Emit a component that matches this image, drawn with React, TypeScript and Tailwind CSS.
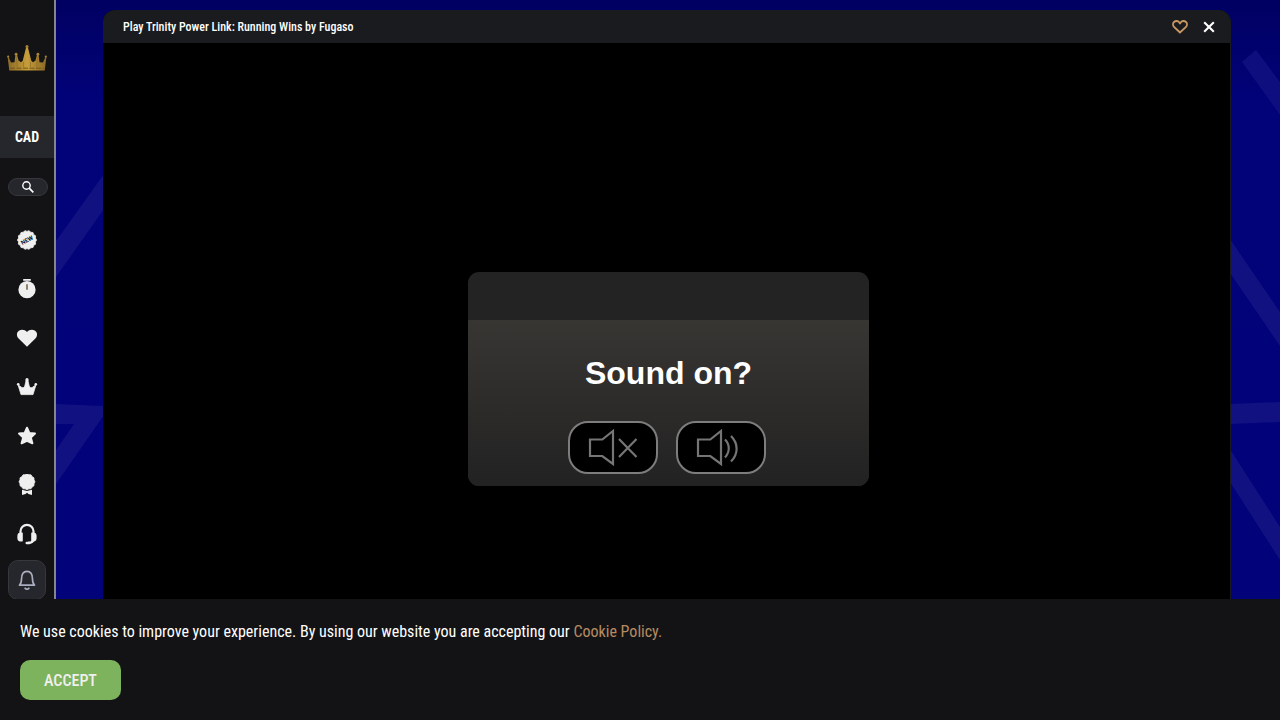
import type { ReactNode } from 'react';

function Backdrop() {
  return (
    <svg className="absolute inset-0 h-full w-full" viewBox="0 0 1280 720" preserveAspectRatio="none" aria-hidden="true">
      <defs>
        <linearGradient id="shade" x1="0" y1="0" x2="0" y2="1">
          <stop offset="0" stopColor="#000062" />
          <stop offset="0.14" stopColor="#020279" />
          <stop offset="1" stopColor="#02027a" />
        </linearGradient>
      </defs>
      <rect width="1280" height="720" fill="url(#shade)" />
      <g fill="#111182">
        <path d="M104 174L56 241v36l48-68z" />
        <path d="M56 404l48 2v9L56 484v-34l18-26H56z" />
        <path d="M1242 62l14-12 24 32v33z" opacity=".8" />
        <path d="M1230 239l50 73v34l-50-73z" />
        <path d="M1230 404l50-2v20l-50 2z" />
        <path d="M1230 449l50 78v33l-50-78z" />
      </g>
    </svg>
  );
}

function GoldCrown() {
  return (
    <svg width="40" height="26" viewBox="0 0 40 26" aria-hidden="true">
      <defs>
        <linearGradient id="gold" x1="0" y1="0" x2="1" y2="0">
          <stop offset="0" stopColor="#8b6a24" />
          <stop offset="0.3" stopColor="#ad8732" />
          <stop offset="0.5" stopColor="#c79e3a" />
          <stop offset="0.7" stopColor="#ad8732" />
          <stop offset="1" stopColor="#8b6a24" />
        </linearGradient>
      </defs>
      <path
        d="M2.300 25.500L.6 12h1L4 17.500l3.500-.2L8.500 9h1.300l1.700 6.500 2.500 1.800 1.700-1.500L19.200 2h1.600l3.500 13.800 1.700 1.500 2.500-1.800L30.200 9h1.300l1 8.300 3.500.2L38.400 12h1l-1.700 13.500z"
        fill="url(#gold)"
      />
      <path d="M3 23.200h34" stroke="#735719" strokeWidth="1" strokeDasharray="5 1.500" />
      <path d="M9.300 12l1 10M30.700 12l-1 10M16.500 17v5M23.500 17v5" stroke="#8d6f28" strokeWidth=".7" />
      <g fill="#a88432">
        <circle cx="20" cy="1.600" r="1.500" />
        <circle cx="9.100" cy="9.200" r="1.400" />
        <circle cx="30.900" cy="9.200" r="1.400" />
        <circle cx="1.200" cy="11.600" r="1.100" />
        <circle cx="38.800" cy="11.600" r="1.100" />
      </g>
    </svg>
  );
}

function scallop(cx: number, cy: number, outer: number, inner: number, lobes: number) {
  return Array.from({ length: lobes * 2 }, (_, i) => {
    const r = i % 2 ? inner : outer;
    const a = (i * Math.PI) / lobes;
    return `${(cx + r * Math.cos(a)).toFixed(2)},${(cy + r * Math.sin(a)).toFixed(2)}`;
  }).join(' ');
}

function NavIcon({ children }: { children: ReactNode }) {
  return (
    <svg width="22" height="22" viewBox="0 0 22 22" fill="#efefef" aria-hidden="true">
      {children}
    </svg>
  );
}

const navItems: { label: string; icon: ReactNode }[] = [
  {
    label: 'New games',
    icon: (
      <>
        <polygon points={scallop(11, 11, 9.6, 8.6, 14)} stroke="#efefef" strokeWidth=".8" strokeLinejoin="round" />
        <text x="11" y="13.200" transform="rotate(-28 11 11)" textAnchor="middle" fontFamily="Roboto, sans-serif" fontWeight="700" fontSize="6" fill="#131315">
          NEW
        </text>
      </>
    ),
  },
  {
    label: 'Quick games',
    icon: (
      <>
        <path d="M7.200 1h7.600v1.800H7.200z" />
        <circle cx="11" cy="11.700" r="8.600" />
        <path d="M11 6.200v5.500" stroke="#6f6238" strokeWidth="1.500" />
      </>
    ),
  },
  {
    label: 'Favourites',
    icon: <path d="M11 19.800L2.600 11.500C.2 8.900.5 5.300 2.900 3.700 5.500 2 9 2.500 11 5.100c2-2.600 5.500-3.100 8.100-1.400 2.400 1.600 2.700 5.200.3 7.800z" />,
  },
  {
    label: 'VIP',
    icon: (
      <>
        <path d="M5 18.600L2 8.800l3.800 2.700c1.300.5 2.600-.2 3-1.500L10.200 4h1.600l1.400 6c.4 1.300 1.700 2 3 1.500L20 8.800l-3 9.800z" stroke="#efefef" strokeWidth=".8" strokeLinejoin="round" />
        <circle cx="11" cy="3.700" r="1.600" />
        <circle cx="2.200" cy="8.200" r="1.300" />
        <circle cx="19.800" cy="8.200" r="1.300" />
      </>
    ),
  },
  {
    label: 'Popular',
    icon: (
      <path
        d="M11 2.700l2.300 5.200 5.700.7-4.200 3.900 1.600 5.800-5.400-2.500-5.400 2.500 1.600-5.800L3 8.600l5.700-.7z"
        stroke="#efefef"
        strokeWidth="2"
        strokeLinejoin="round"
      />
    ),
  },
  {
    label: 'Tournaments',
    icon: (
      <>
        <polygon points={scallop(11, 7.8, 8, 7.3, 12)} stroke="#efefef" strokeWidth=".8" strokeLinejoin="round" />
        <path d="M6 15.800l5 1.200 5-1.200v5.300l-3.500-1.100-1.500-1.200-1.500 1.200L6 21.100z" />
      </>
    ),
  },
  {
    label: 'Support',
    icon: (
      <>
        <path d="M4.500 13V8.300a6.500 6.500 0 0113 0V16c0 2.800-2.200 3.900-5.500 3.900" fill="none" stroke="#efefef" strokeWidth="2.200" />
        <path d="M1.600 11.500C2 9.500 4.500 9 6.800 9.800v8.400c-2 .7-4 .3-4.900-1-.6-1-.7-4-.3-5.700zM20.400 11.500c-.4-2-2.900-2.500-5.200-1.700v8.400c2 .7 4 .3 4.900-1 .6-1 .7-4 .3-5.700z" />
        <rect x="9.500" y="18.700" width="5" height="2.600" rx="1.300" />
      </>
    ),
  },
];

function Sidebar() {
  return (
    <aside className="relative flex w-14 shrink-0 flex-col overflow-hidden border-r-2 border-[#85858c] bg-[#131315]">
      <a href="#home" aria-label="Home" className="flex h-[116px] shrink-0 items-center justify-center">
        <GoldCrown />
      </a>
      <button className="h-[42px] shrink-0 bg-[#26272c] text-sm font-bold text-white">CAD</button>
      <button aria-label="Search" className="mt-5 ml-2 flex h-[18px] w-10 shrink-0 items-center justify-center rounded-full border border-[#37383d] bg-[#26272c]">
        <svg width="12" height="12" viewBox="0 0 12 12" fill="none" stroke="#fff" aria-hidden="true">
          <circle cx="4.500" cy="4.500" r="3.700" strokeWidth="1.400" />
          <path d="M7.200 7.200L11.300 11.300" strokeWidth="1.700" />
        </svg>
      </button>
      <nav className="mt-[19px] flex shrink-0 flex-col">
        {navItems.map((item) => (
          <a key={item.label} href="#games" aria-label={item.label} className="flex h-[49px] items-center justify-center">
            <NavIcon>{item.icon}</NavIcon>
          </a>
        ))}
      </nav>
      <button aria-label="Notifications" className="mt-[2px] ml-2 flex h-10 w-[38px] shrink-0 items-center justify-center rounded-[10px] border border-[#37383d] bg-[#26272c]">
        <svg width="18" height="20" viewBox="0 0 18 20" fill="none" stroke="#a9adbd" strokeWidth="1.700" strokeLinecap="round" strokeLinejoin="round" aria-hidden="true">
          <path d="M1.500 15.200c1.700-1.500 2-3 2-6.200C3.500 4 5.500 1.300 9 1.300S14.500 4 14.500 9c0 3.200.3 4.700 2 6.200z" />
          <path d="M7.200 18.300c1 .9 2.600.9 3.600 0" strokeWidth="1.800" />
        </svg>
      </button>
    </aside>
  );
}

function SoundButton({ label, children }: { label: string; children: ReactNode }) {
  return (
    <button aria-label={label} className="flex h-[53px] w-[90px] items-center rounded-[20px] border-2 border-[#7d7d7d] bg-black pl-[18px]">
      <svg width="52" height="38" viewBox="0 0 52 38" fill="none" stroke="#757575" strokeWidth="2.200" aria-hidden="true">
        <path d="M2 10.500h12.300L25 2v33L14.300 27H2z" />
        {children}
      </svg>
    </button>
  );
}

function SoundDialog() {
  return (
    <section aria-label="Sound" className="flex w-[401px] flex-col overflow-hidden rounded-[11px] bg-[#232323]">
      <div className="h-12" />
      <div className="flex h-[166px] flex-col items-center bg-linear-to-b from-[#383633] to-[#222222] pt-8">
        <h2 className="font-['Liberation_Sans',Arial,sans-serif] text-[32px] leading-[42px] font-bold text-white">Sound on?</h2>
        <div className="mt-[27px] flex gap-[18px] pr-[3px]">
          <SoundButton label="Sound off">
            <path d="M31 10l17.500 18M48.500 10L31 28" />
          </SoundButton>
          <SoundButton label="Sound on">
            <path d="M29 10.500c5 5 5 12.500 0 18" />
            <path d="M35 7c7.500 7.500 7.500 18 0 25.500" />
          </SoundButton>
        </div>
      </div>
    </section>
  );
}

function GameWindow() {
  return (
    <main className="relative mt-[10px] mr-[49px] mb-[5px] flex min-w-0 flex-1 flex-col overflow-hidden rounded-t-[12px] border-r border-[#1a1b1e] bg-black">
      <header className="flex h-[33px] shrink-0 items-center justify-between bg-[#1a1b1e] pr-[14px] pl-5">
        <h1 className="text-xs font-medium text-white">Play Trinity Power Link: Running Wins by Fugaso</h1>
        <div className="flex items-center gap-[14px]">
          <button aria-label="Add to favourites">
            <svg width="16" height="14" viewBox="0 0 16 14" fill="none" stroke="#c99763" strokeWidth="1.900" aria-hidden="true">
              <path d="M8 12.500L2 6.900C.7 5.400.8 3.100 2 2c1.600-1.400 4-1.300 5.200.3L8 3.300l.8-1C10 .7 12.400.6 14 2c1.200 1.100 1.300 3.400 0 4.900z" />
            </svg>
          </button>
          <button aria-label="Close">
            <svg width="14" height="12" viewBox="0 0 14 12" stroke="#fff" strokeWidth="2.100" aria-hidden="true">
              <path d="M2.200 1.200l9.600 9.600M11.800 1.200L2.200 10.800" />
            </svg>
          </button>
        </div>
      </header>
      <div className="flex flex-1 items-center justify-center pl-1">
        <SoundDialog />
      </div>
    </main>
  );
}

export default function App() {
  return (
    <div className="relative flex h-screen overflow-hidden bg-[#02027a] font-['Roboto_Condensed',Roboto,sans-serif]">
      <Backdrop />
      <Sidebar />
      <div className="w-[47px] shrink-0" />
      <GameWindow />
      <footer className="fixed inset-x-0 bottom-0 flex flex-col items-start gap-4 bg-[#131315] px-5 pt-[21px] pb-5">
        <p className="text-base leading-6 text-white">
          We use cookies to improve your experience. By using our website you are accepting our{' '}
          <a href="#cookies" className="text-[#b78b62]">
            Cookie Policy.
          </a>
        </p>
        <button className="h-10 rounded-[10px] bg-[#7eb35d] px-6 pt-0.5 text-base font-medium text-[#efefef]">ACCEPT</button>
      </footer>
    </div>
  );
}
